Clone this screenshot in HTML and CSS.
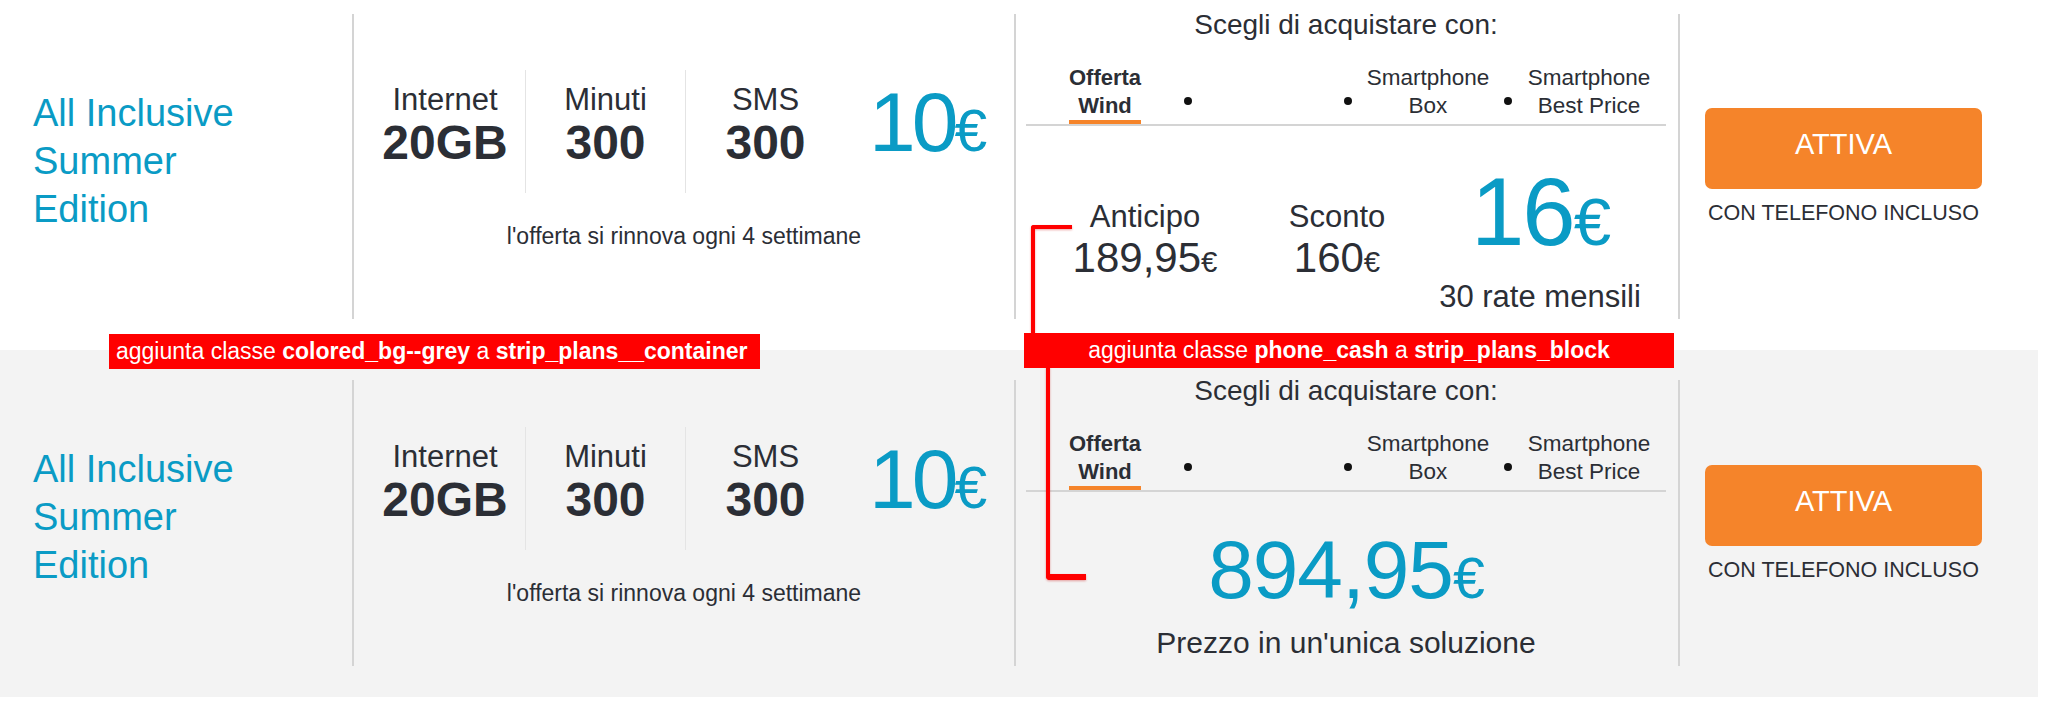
FILE: index.html
```html
<!DOCTYPE html>
<html lang="it">
<head>
<meta charset="utf-8">
<title>Strip plans</title>
<link rel="stylesheet" href="styles.css">
</head>
<body>
<div class="page">
  <section class="strip">
    <div class="plan">
      <div class="plan__name"><h2 class="plan__title">All Inclusive Summer Edition</h2></div>
      <div class="plan__offer">
        <div class="offer__row">
          <div class="stats">
            <div class="stat"><span class="stat__label">Internet</span><span class="stat__value">20GB</span></div>
            <div class="stat"><span class="stat__label">Minuti</span><span class="stat__value">300</span></div>
            <div class="stat"><span class="stat__label">SMS</span><span class="stat__value">300</span></div>
          </div>
          <div class="offer__price">10<span class="euro">€</span></div>
        </div>
        <p class="offer__note">l'offerta si rinnova ogni 4 settimane</p>
      </div>
      <div class="plan__phone">
        <p class="phone__heading">Scegli di acquistare con:</p>
        <ul class="tabs">
          <li class="tab tab--active"><span class="tab__label"><span class="tab__text">Offerta<br>Wind</span></span></li>
          <li class="tab"><span class="tab__dot"></span><span class="tab__label"></span></li>
          <li class="tab"><span class="tab__dot"></span><span class="tab__label"><span class="tab__text">Smartphone<br>Box</span></span></li>
          <li class="tab"><span class="tab__dot"></span><span class="tab__label"><span class="tab__text">Smartphone<br>Best Price</span></span></li>
        </ul>
        <div class="installments">
          <div class="installment">
            <span class="installment__label">Anticipo</span>
            <span class="installment__value">189,95<span class="euro">€</span></span>
          </div>
          <div class="installment">
            <span class="installment__label">Sconto</span>
            <span class="installment__value">160<span class="euro">€</span></span>
          </div>
          <div class="installment installment--main">
            <span class="installment__big">16<span class="euro">€</span></span>
            <span class="installment__rates">30 rate mensili</span>
          </div>
        </div>
      </div>
      <div class="plan__cta">
        <div class="cta">
          <a class="cta__button" href="#">ATTIVA</a>
          <p class="cta__note">CON TELEFONO INCLUSO</p>
        </div>
      </div>
    </div>
  </section>

  <section class="strip strip--grey">
    <div class="plan">
      <div class="plan__name"><h2 class="plan__title">All Inclusive Summer Edition</h2></div>
      <div class="plan__offer">
        <div class="offer__row">
          <div class="stats">
            <div class="stat"><span class="stat__label">Internet</span><span class="stat__value">20GB</span></div>
            <div class="stat"><span class="stat__label">Minuti</span><span class="stat__value">300</span></div>
            <div class="stat"><span class="stat__label">SMS</span><span class="stat__value">300</span></div>
          </div>
          <div class="offer__price">10<span class="euro">€</span></div>
        </div>
        <p class="offer__note">l'offerta si rinnova ogni 4 settimane</p>
      </div>
      <div class="plan__phone plan__phone--cash">
        <p class="phone__heading">Scegli di acquistare con:</p>
        <ul class="tabs">
          <li class="tab tab--active"><span class="tab__label"><span class="tab__text">Offerta<br>Wind</span></span></li>
          <li class="tab"><span class="tab__dot"></span><span class="tab__label"></span></li>
          <li class="tab"><span class="tab__dot"></span><span class="tab__label"><span class="tab__text">Smartphone<br>Box</span></span></li>
          <li class="tab"><span class="tab__dot"></span><span class="tab__label"><span class="tab__text">Smartphone<br>Best Price</span></span></li>
        </ul>
        <div class="cash">
          <div class="cash__price">894,95<span class="euro">€</span></div>
          <p class="cash__note">Prezzo in un'unica soluzione</p>
        </div>
      </div>
      <div class="plan__cta">
        <div class="cta">
          <a class="cta__button" href="#">ATTIVA</a>
          <p class="cta__note">CON TELEFONO INCLUSO</p>
        </div>
      </div>
    </div>
  </section>

  <div class="bracket bracket--top"></div>
  <div class="bracket bracket--bottom"></div>
  <div class="annotation annotation--container">aggiunta classe <b>colored_bg--grey</b> a <b>strip_plans__container</b></div>
  <div class="annotation annotation--block">aggiunta classe <b>phone_cash</b> a <b>strip_plans_block</b></div>
</div>
</body>
</html>
```

FILE: styles.css
```css
body {
  margin: 0;
  font-family: "Liberation Sans", Arial, sans-serif;
  color: #2b2e35;
  background: #ffffff;
}

.page {
  position: relative;
  width: 2038px;
}

.strip {
  padding: 14px 0 31px;
}

.strip--grey {
  background: #f3f3f3;
  padding-top: 30px;
}

.plan {
  display: flex;
}

/* column 1 : plan name */
.plan__name {
  width: 354px;
  box-sizing: border-box;
  border-right: 2px solid #d4d4d4;
  padding-left: 33px;
  display: flex;
  align-items: center;
}

.plan__title {
  margin: 0;
  width: 240px;
  padding-bottom: 12px;
  font-size: 38px;
  line-height: 48px;
  font-weight: 400;
  color: #0a9bc5;
}

/* column 2 : offer */
.plan__offer {
  width: 662px;
  box-sizing: border-box;
  border-right: 2px solid #d4d4d4;
  display: flex;
  flex-direction: column;
  justify-content: center;
  padding-bottom: 13px;
}

.offer__row {
  display: flex;
  align-items: flex-start;
  padding-left: 11px;
}

.stats {
  display: flex;
}

.stat {
  width: 160px;
  box-sizing: border-box;
  display: flex;
  flex-direction: column;
  align-items: center;
  padding: 13px 0 25px;
}

.stat + .stat {
  border-left: 1px solid #e4e4e4;
}

.stat__label {
  font-size: 31px;
  line-height: 34px;
}

.stat__value {
  margin-top: 1px;
  font-size: 48px;
  line-height: 50px;
  font-weight: 700;
}

.offer__price {
  margin: 12px 0 0 24px;
  font-size: 84px;
  line-height: 80px;
  letter-spacing: -4px;
  color: #0a9bc5;
}

.offer__note {
  margin: 29px 0 0;
  text-align: center;
  font-size: 23px;
  line-height: 28px;
}

.euro {
  font-size: 0.7em;
  line-height: 0;
}

/* column 3 : phone purchase */
.plan__phone {
  width: 664px;
  box-sizing: border-box;
  border-right: 2px solid #d4d4d4;
  padding: 0 12px 4px 10px;
}

.phone__heading {
  margin: -3px 0 0;
  text-align: center;
  font-size: 28px;
  line-height: 28px;
}

.tabs {
  list-style: none;
  margin: 25px 0 0;
  padding: 0;
  display: grid;
  grid-template-columns: 158px 160px 160px 162px;
  border-bottom: 2px solid #d4d4d4;
}

.tab {
  display: flex;
  align-items: center;
}

.tab__dot {
  flex: none;
  width: 8px;
  height: 8px;
  margin-top: 13px;
  border-radius: 50%;
  background: #111111;
}

.tab__label {
  flex: 1;
  align-self: stretch;
  text-align: center;
  font-size: 22.5px;
  line-height: 28px;
}

.tab__text {
  display: inline-block;
  border-bottom: 4px solid transparent;
}

.tab--active .tab__text {
  font-size: 22px;
  font-weight: 700;
  border-bottom-color: #f5842a;
}

.installments {
  display: grid;
  grid-template-columns: 190px 194px 212px;
  align-items: center;
  margin-top: 38px;
  padding-left: 24px;
}

.installment {
  display: flex;
  flex-direction: column;
  align-items: center;
}

.installment__label {
  font-size: 31px;
  line-height: 36px;
}

.installment__value {
  margin-top: 1px;
  font-size: 42px;
  line-height: 44px;
}

.installment__big {
  font-size: 96px;
  line-height: 96px;
  letter-spacing: -2px;
  color: #0a9bc5;
}

.installment__rates {
  margin-top: 19px;
  font-size: 31px;
  line-height: 36px;
}

.cash {
  margin-top: 37px;
  padding-bottom: 2px;
  text-align: center;
}

.cash__price {
  font-size: 82px;
  line-height: 82px;
  letter-spacing: -1px;
  color: #0a9bc5;
}

.cash__note {
  margin: 15px 0 0;
  font-size: 30px;
  line-height: 34px;
}

/* column 4 : call to action */
.plan__cta {
  flex: 1;
  display: flex;
  align-items: center;
  padding-left: 25px;
}

.cta {
  width: 277px;
  text-align: center;
}

.cta__button {
  display: block;
  height: 73px;
  padding-bottom: 8px;
  line-height: 73px;
  border-radius: 7px;
  background: #f5842a;
  color: #ffffff;
  font-size: 29px;
  text-decoration: none;
}

.cta__note {
  margin: 12px 0 0;
  font-size: 21.5px;
  line-height: 24px;
  white-space: nowrap;
}

/* annotations overlay */
.annotation {
  position: absolute;
  height: 35px;
  line-height: 35px;
  background: #ff0000;
  color: #ffffff;
  font-size: 23px;
  white-space: nowrap;
}

.annotation--container {
  left: 109px;
  top: 334px;
  width: 651px;
  box-sizing: border-box;
  padding-left: 7px;
}

.annotation--block {
  left: 1024px;
  top: 333px;
  width: 650px;
  text-align: center;
}

.bracket {
  position: absolute;
  border: 0 solid #ff0000;
  filter: drop-shadow(0 1px 1px rgba(200, 0, 0, 0.35));
}

.bracket--top {
  left: 1031px;
  top: 225px;
  width: 37px;
  height: 104px;
  border-left-width: 4px;
  border-top-width: 4px;
  border-top-left-radius: 3px;
}

.bracket--bottom {
  left: 1046px;
  top: 366px;
  width: 36px;
  height: 208px;
  border-left-width: 4px;
  border-bottom-width: 6px;
  border-bottom-left-radius: 4px;
}
```
